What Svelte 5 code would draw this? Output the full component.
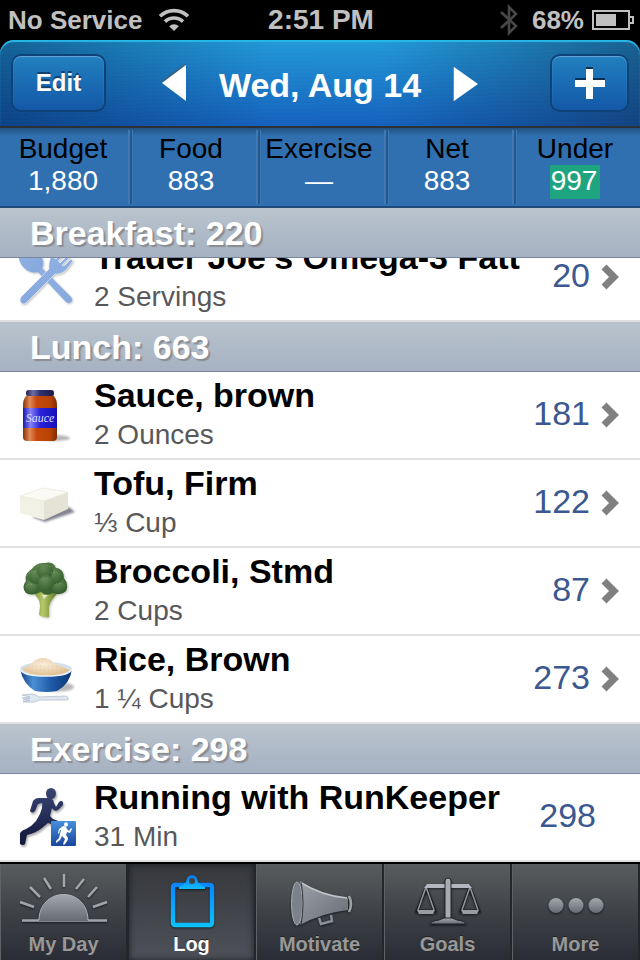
<script>
  const stats = [
    { label: 'Budget', value: '1,880' },
    { label: 'Food', value: '883' },
    { label: 'Exercise', value: '—' },
    { label: 'Net', value: '883' },
    { label: 'Under', value: '997', good: true }
  ];

  const sections = [
    {
      title: 'Breakfast: 220',
      items: [
        { icon: 'cutlery', name: 'Trader Joe’s Omega-3 Fatt', amount: '2 Servings', calories: 20, more: true, scrolled: true }
      ]
    },
    {
      title: 'Lunch: 663',
      items: [
        { icon: 'sauce', name: 'Sauce, brown', amount: '2 Ounces', calories: 181, more: true },
        { icon: 'tofu', name: 'Tofu, Firm', amount: '⅓ Cup', calories: 122, more: true },
        { icon: 'broccoli', name: 'Broccoli, Stmd', amount: '2 Cups', calories: 87, more: true },
        { icon: 'rice', name: 'Rice, Brown', amount: '1 ¼ Cups', calories: 273, more: true }
      ]
    },
    {
      title: 'Exercise: 298',
      items: [{ icon: 'run', name: 'Running with RunKeeper', amount: '31 Min', calories: 298 }]
    }
  ];

  const tabs = ['My Day', 'Log', 'Motivate', 'Goals', 'More'];
  let active = $state('Log');
</script>

<svg class="defs" width="0" height="0" aria-hidden="true">
  <defs>
    <linearGradient id="metal" x1="0" y1="0" x2="0" y2="1"><stop offset="0" stop-color="#a3a8ad" /><stop offset="1" stop-color="#666b71" /></linearGradient>
    <linearGradient id="glow" gradientUnits="userSpaceOnUse" x1="0" y1="5" x2="0" y2="57"><stop offset="0.15" stop-color="#0a84ff" /><stop offset="1" stop-color="#0cc2fb" /></linearGradient>
    <linearGradient id="clip" x1="0" y1="0" x2="0" y2="1"><stop offset="0" stop-color="#0b78ee" /><stop offset="1" stop-color="#10bdfc" /></linearGradient>
    <linearGradient id="jar" x1="0" x2="1"><stop offset="0" stop-color="#8a3306" /><stop offset="0.2" stop-color="#e08a5a" /><stop offset="0.4" stop-color="#c5480c" /><stop offset="0.8" stop-color="#b84205" /><stop offset="1" stop-color="#7d2c03" /></linearGradient>
    <linearGradient id="label" x1="0" x2="1"><stop offset="0" stop-color="#1813b4" /><stop offset="0.22" stop-color="#8480f2" /><stop offset="0.5" stop-color="#2a22dc" /><stop offset="1" stop-color="#150fb8" /></linearGradient>
    <linearGradient id="lid" x1="0" x2="1"><stop offset="0" stop-color="#20204e" /><stop offset="0.25" stop-color="#6f6fa8" /><stop offset="0.5" stop-color="#30306c" /><stop offset="1" stop-color="#1c1c4a" /></linearGradient>
    <linearGradient id="bowl" x1="0" x2="1"><stop offset="0" stop-color="#123f85" /><stop offset="0.25" stop-color="#4a8fd4" /><stop offset="0.6" stop-color="#1f5aa8" /><stop offset="1" stop-color="#0d3472" /></linearGradient>
    <radialGradient id="grain" cx="0.45" cy="0.35" r="0.65"><stop offset="0" stop-color="#f9efdf" /><stop offset="1" stop-color="#e0bd8c" /></radialGradient>
    <radialGradient id="leaf" cx="0.4" cy="0.3" r="0.8"><stop offset="0" stop-color="#668a56" /><stop offset="0.6" stop-color="#446d3b" /><stop offset="1" stop-color="#335629" /></radialGradient>
    <linearGradient id="stalk" x1="0" x2="1"><stop offset="0" stop-color="#6c8c29" /><stop offset="0.4" stop-color="#b7c86a" /><stop offset="1" stop-color="#51701b" /></linearGradient>
    <linearGradient id="navy" gradientUnits="userSpaceOnUse" x1="0" y1="0" x2="0" y2="58"><stop offset="0" stop-color="#3a4574" /><stop offset="1" stop-color="#10173a" /></linearGradient>
    <linearGradient id="badge" x1="0" y1="0" x2="0" y2="1"><stop offset="0" stop-color="#4590dc" /><stop offset="1" stop-color="#1c459c" /></linearGradient>
    <linearGradient id="steel" x1="0" y1="0" x2="0" y2="1"><stop offset="0" stop-color="#8fb1e2" /><stop offset="1" stop-color="#86a8de" /></linearGradient>
    <linearGradient id="horn" x1="0" y1="0" x2="1" y2="1"><stop offset="0" stop-color="#9aa0a8" /><stop offset="1" stop-color="#686d74" /></linearGradient>
  </defs>
</svg>

<div class="phone">
  <div class="status">
    <span class="carrier">
      No Service
      <svg width="32" height="24" viewBox="0 0 32 24" fill="none" stroke="#c0c0c0" stroke-width="3.6" aria-hidden="true">
        <path d="M2 8.3A20 20 0 0 1 30 8.3" /><path d="M7 13.6A13 13 0 0 1 25 13.6" />
        <path d="M16 23L11.2 18.2A7 7 0 0 1 20.8 18.2Z" fill="#c0c0c0" stroke="none" />
      </svg>
    </span>
    <time>2:51 PM</time>
    <span class="power">
      <svg width="18" height="32" viewBox="0 0 18 32" fill="none" stroke="#484848" stroke-width="2.6" aria-hidden="true"><path d="M1 8L16 22L9 29V3L16 10L1 24" /></svg>
      68%
      <svg width="42" height="20" viewBox="0 0 42 20" aria-hidden="true">
        <rect x="1" y="1" width="36" height="18" fill="none" stroke="#c0c0c0" stroke-width="2" />
        <path d="M38 7H41V13H38" fill="none" stroke="#c0c0c0" stroke-width="2" />
        <rect x="4" y="4" width="20" height="12" fill="#c0c0c0" />
      </svg>
    </span>
  </div>

  <header class="nav">
    <button class="key edit">Edit</button>
    <div class="day">
      <button class="step" aria-label="Previous day">
        <svg width="26" height="38" viewBox="0 0 26 38"><path d="M0 17L25 -1V16Z" fill="#555" opacity=".5" /><path d="M1 19L25 1V37Z" fill="#fff" /></svg>
      </button>
      <h1>Wed, Aug 14</h1>
      <button class="step" aria-label="Next day">
        <svg width="26" height="38" viewBox="0 0 26 38"><path d="M1 3L25 20L1 37Z" fill="#fff" /><path d="M.5 3V37" stroke="#888" /></svg>
      </button>
    </div>
    <button class="key add" aria-label="Add">
      <svg width="30" height="34" viewBox="0 0 30 34"><path d="M11 1H18V12H30V19H0V12H11Z" fill="#0b3157" /><path d="M11 3H18V14H30V21H18V33H11V21H0V14H11Z" fill="#fff" /></svg>
    </button>
  </header>

  <dl class="stats">
    {#each stats as s}
      <div class="stat">
        <dt>{s.label}</dt>
        <dd><span class:good={s.good}>{s.value}</span></dd>
      </div>
    {/each}
  </dl>

  <main>
    {#each sections as section}
      <section>
        <h2>{section.title}</h2>
        {#each section.items as item}
          <a class="row" class:scrolled={item.scrolled} href="#{item.icon}">
            <svg class="pic" width="60" height="60" viewBox="0 0 60 60" aria-hidden="true">
              {#if item.icon === 'cutlery'}
                <g fill="url(#steel)" class="soft">
                  <path d="M22 19L53 50Q55 53 53 55Q51 57 48 55L19 24Z" />
                  <ellipse cx="13" cy="13" rx="10.5" ry="14" transform="rotate(-42 13 13)" />
                  <path d="M31 22Q30 12 36 6L41 1L43 3L36 11L38 12L46 4L48 6L40 14L42 16L50 8L52 10L44 18L46 19L53 12L55 14L49 22Q43 28 37 27L8 56Q6 58 3 56Q1 53 3 50Z" stroke="#fff" stroke-width=".5" />
                </g>
              {:else if item.icon === 'sauce'}
                <ellipse cx="36" cy="53" rx="16" ry="3" fill="#777" opacity=".55" class="blur" />
                <path d="M9 10H35Q39 14 39 20V52Q39 56 35 56H9Q5 56 5 52V20Q5 14 9 10Z" fill="url(#jar)" />
                <path d="M5 23H39V43H5Z" fill="url(#label)" />
                <rect x="8" y="5" width="28" height="6" rx="2.5" fill="url(#lid)" />
                <text x="22" y="37" text-anchor="middle" class="script">Sauce</text>
              {:else if item.icon === 'tofu'}
                <path d="M14 44L27 49L57 39L51 34Z" fill="#667" opacity=".8" class="blur" />
                <path d="M2 23L26 28V47L2 40Z" fill="#f2f1e6" />
                <path d="M26 28L50 19V36L26 47Z" fill="#e5e3d5" />
                <path d="M2 23L25 15L50 19L26 28Z" fill="#fbfaf4" stroke="#e9e8dc" stroke-width=".8" />
              {:else if item.icon === 'broccoli'}
                <g class="soft">
                  <path d="M14 31Q22 37 22 45L21 54Q26 57 31 56V46Q32 39 41 31L32 28H20Z" fill="url(#stalk)" />
                  <path d="M24 34L26 38L30 34" fill="#dfe6c9" />
                  <g fill="url(#leaf)">
                    <path d="M8 32Q3 26 8 20Q6 13 13 9Q18 1 27 2Q35 0 38 7Q46 8 46 17Q51 23 48 30Q43 35 35 32Q28 36 23 31Q14 35 8 32Z" />
                    <circle cx="14" cy="26" r="7.500" /><circle cx="41" cy="25" r="7.500" /><circle cx="18" cy="15" r="8" /><circle cx="37" cy="15" r="8" />
                    <circle cx="27" cy="10" r="8" /><circle cx="28" cy="22" r="8" />
                  </g>
                </g>
                <g fill="none" stroke="#a0b78b" stroke-width="1" stroke-dasharray="1 2" opacity=".6">
                  <path d="M20 5Q27 2 34 7M9 15Q13 9 19 11M33 12Q39 9 43 15M8 26Q12 21 17 25M38 23Q43 20 47 26M23 19Q28 15 34 20" />
                </g>
              {:else if item.icon === 'rice'}
                <ellipse cx="41" cy="38" rx="15" ry="4.500" fill="#666" opacity=".45" class="blur" />
                <ellipse cx="28" cy="20" rx="26" ry="7" fill="#d3e1ec" />
                <path d="M4 20Q10 18 15 13Q19 9 25 9Q31 9 36 14L52 21Q42 28 28 27Q11 27 4 20Z" fill="url(#grain)" />
                <path d="M10 21L47 21M14 17L42 18M20 13L34 14" stroke="#d2ad76" stroke-dasharray="1 3" opacity=".4" />
                <path d="M2 20Q4 27 28 27Q52 27 54 20Q52 35 39 42Q28 44 17 42Q5 35 2 20Z" fill="url(#bowl)" />
                <path d="M2 20Q4 27 28 27Q52 27 54 20" fill="none" stroke="#e9f2f8" stroke-width="1.4" />
                <path d="M4 46L14 45Q19 46 21 48L48 47Q51 48 50 51L21 51Q17 54 12 53L5 53L12 51.5L5 51L12 49.5L4 49L12 48Z" fill="#dfe7f0" stroke="#b4bfce" stroke-width=".8" />
              {:else}
                <g class="shade" fill="url(#navy)">
                  <ellipse cx="33" cy="6.500" rx="5" ry="5.500" />
                  <path d="M28 11Q35 10 36 16L38 20L41 15Q43 13 45 15V18L40 23Q36 25 34 21L32 29L35 32L46 36L45 41L30 36L24 41Q18 46 9 48L7 57Q5 59 2 57V46Q4 43 8 42Q14 39 18 34L22 27Q25 20 24 16L20 17L17 24Q14 27 12 24L15 14Q17 11 21 11Z" />
                </g>
                <rect x="33" y="34" width="25" height="25" rx="1" fill="url(#badge)" />
                <g fill="#fff">
                  <ellipse cx="48" cy="37.500" rx="2" ry="2.300" />
                  <path d="M45 39Q48 39 49 42L51 44L53 41L54 42L52 46L49 45L48 48L50 51Q50 54 46 58L45 57L47 52L44 49L42 53L38 56L38 54L41 51L43 43L42 43L41 47L40 46L41 42Z" />
                </g>
              {/if}
            </svg>
            <span class="text">
              <span class="name">{item.name}</span>
              <span class="amount">{item.amount}</span>
            </span>
            <span class="cal" class:flush={!item.more}>{item.calories}</span>
            {#if item.more}
              <svg width="20" height="28" viewBox="0 0 20 28" fill="none" stroke="#808080" stroke-width="7" aria-hidden="true"><path d="M4 4L14 14L4 24" /></svg>
            {/if}
          </a>
        {/each}
      </section>
    {/each}
  </main>

  <nav class="tabs">
    {#each tabs as tab}
      <button class="tab" class:active={tab === active} onclick={() => (active = tab)}>
        <svg width="96" height="62" viewBox="0 0 96 62" aria-hidden="true">
          {#if tab === 'My Day'}
            <g stroke="#a2a6ab" stroke-width="2.6"><path d="M48 4V17M28 8L35 19M14 17L24 27M4 32L18 37M68 9L60 19M81 17L72 27M91 32L77 37M6 50.500H91" /></g>
            <path d="M23 51C23 36 33 24.500 47.500 24.500S72 36 72 51Z" fill="url(#metal)" /><path d="M23 50C23 36 33 24.500 47.500 24.500S72 36 72 50" fill="none" stroke="#b4b8bc" />
          {:else if tab === 'Log'}
            <rect x="29" y="15" width="39" height="40" rx="2" fill="none" stroke="url(#glow)" stroke-width="4.400" />
            <path d="M35 19V17Q40 15 42 12Q43 5 48 5T54 12Q56 15 61 17V19Z" fill="url(#clip)" />
            <circle cx="48" cy="11" r="3" fill="#404246" />
          {:else if tab === 'Motivate'}
            <path d="M47 48L49 54L60 51L59 45" fill="none" stroke="#8b9096" stroke-width="2.500" />
            <path d="M28 12Q50 26 76 28V40Q50 43 28 55Q32 33 28 12Z" fill="url(#horn)" /><path d="M28 12Q50 26 75 28" fill="none" stroke="#c0c3c7" stroke-width="1.500" />
            <ellipse cx="25" cy="33.500" rx="5.500" ry="21.500" fill="#7b828b" stroke="#a9aeb4" />
            <path d="M29 12Q33 33 29 55" fill="none" stroke="#303337" />
            <path d="M77 26Q81 34 77 42" fill="none" stroke="#9ea2a7" stroke-width="2.600" />
          {:else if tab === 'Goals'}
            <g stroke="#1c1e21" stroke-width="3" fill="none"><path d="M27 16H69L79 41H61L70 17M27 16L17 41H35L26 17" /></g>
            <g fill="none" stroke="#93979c" stroke-width="1.500"><path d="M26 17L18 40M26 17L34 40M70 17L62 40M70 17L78 40" /></g>
            <path d="M27 14H69L72 18H24Z" fill="#b5b5bf" />
            <path d="M17 40H35L33 44H19ZM61 40H79L77 44H63Z" fill="#999da1" />
            <rect x="45" y="8" width="6" height="42" rx="3" fill="#a8abaf" stroke="#25272a" />
            <path d="M30 54Q31 51 39 50L44 48H52L57 50Q65 51 66 54Z" fill="url(#metal)" stroke="#25272a" />
          {:else}
            <g fill="url(#metal)"><circle cx="28" cy="35.500" r="7.500" /><circle cx="48" cy="35.500" r="7.500" /><circle cx="68" cy="35.500" r="7.500" /></g>
          {/if}
        </svg>
        <span>{tab}</span>
      </button>
    {/each}
  </nav>
</div>

<style>
  :global(body) { margin: 0; background: #000; }
  .defs { position: absolute; }
  .phone {
    display: flex; flex-direction: column; min-height: 100vh;
    background: #000; font-family: 'Liberation Sans', Arial, Helvetica, sans-serif;
  }
  svg { flex: none; display: block; }
  button { border: 0; margin: 0; padding: 0; background: none; color: inherit; font: inherit; }

  .status {
    display: grid; grid-template-columns: 1fr auto 1fr; align-items: center;
    height: 40px; padding: 0 6px 0 8px; box-sizing: border-box;
    color: #c0c0c0; font-size: 26px; font-weight: bold;
  }
  .status time { font-size: 28px; }
  .carrier, .power { display: flex; align-items: center; }
  .carrier { gap: 16px; }
  .power { gap: 8px; justify-content: flex-end; }
  .power svg:first-child { margin-right: 6px; }

  .nav {
    display: grid; grid-template-columns: 1fr auto 1fr; align-items: center;
    height: 88px; padding: 0 11px; box-sizing: border-box;
    border-bottom: 2px solid #2c3138; border-radius: 14px 14px 0 0;
    background:
      repeating-linear-gradient(179deg, rgba(255,255,255,.012) 0 1px, transparent 1px 3px, rgba(0,0,0,.015) 3px 4px),
      linear-gradient(90deg, rgba(0,22,60,.42), transparent 42%, transparent 60%, rgba(14,30,60,.46)),
      linear-gradient(#229ad8, #1561bd);
    box-shadow: inset 0 2px 1px #26b9e8;
  }
  .key {
    height: 58px; border-radius: 10px; color: #fff;
    display: flex; align-items: center; justify-content: center;
    background: linear-gradient(#2180bf, #1458a7);
    border: 2px solid #0e4379;
    box-shadow: inset 0 1px 1px #64a9d7;
  }
  .edit { width: 95px; font-size: 24px; font-weight: bold; text-shadow: 0 -2px 0 #10406f; }
  .add { width: 79px; justify-self: end; }
  .day { display: flex; align-items: center; gap: 32px; }
  .nav h1 { margin: 0; padding-top: 4px; color: #fff; font-size: 34px; line-height: 40px; white-space: nowrap; }

  .stats {
    display: flex; margin: 0; height: 80px; box-sizing: border-box;
    padding: 2px 0; border-bottom: 2px solid #1d4a78;
    background: linear-gradient(#22517f, #306fb0 8px);
  }
  .stat {
    flex: 1; min-width: 0; text-align: center; font-size: 28px; line-height: 32px;
    padding: 3px 2px 0 0; box-sizing: border-box;
  }
  .stat + .stat {
    background: linear-gradient(90deg, #3d7ab6 2px, #255788 2px 4px, #3d7ab6 4px 5px, transparent 5px);
  }
  .stat dt { color: #000; }
  .stat dd { margin: 0; color: #fff; }
  .stat .good { display: inline-block; padding: 0 3px 2px 1px; background: #1fa480; }

  main { flex: 1; background: #fff; }
  h2 {
    margin: 0; height: 50px; line-height: 48px; padding: 1px 30px 0; box-sizing: border-box;
    border-bottom: 1px solid #78859c;
    background: linear-gradient(#b9c4ce, #a6b1c2);
    color: #fff; font-size: 34px; text-shadow: 2px 2px 1px #8a8c93;
  }
  .row {
    display: flex; align-items: center; height: 88px; box-sizing: border-box;
    padding: 0 20px 0 18px; border-bottom: 2px solid #e0e0e0;
    background: #fff; color: #000; text-decoration: none;
  }
  .row.scrolled { height: 64px; align-items: flex-end; overflow: hidden; }
  .scrolled > * { margin-bottom: 13px; }
  .scrolled > .text { margin-bottom: 3px; }
  .scrolled > .cal { margin-bottom: 25px; }
  .scrolled > svg:last-child { margin-bottom: 29px; }
  .text { display: flex; flex-direction: column; flex: 1; min-width: 0; margin-left: 16px; height: 80px; }
  .name { font-size: 34px; line-height: 40px; font-weight: bold; white-space: nowrap; }
  .amount { font-size: 28px; line-height: 40px; color: #58585a; }
  .cal { margin: 0 10px 4px 0; font-size: 34px; line-height: 40px; color: #3b5890; }
  .cal.flush { margin-right: 24px; }
  .script { font: italic 12px 'Liberation Serif', serif; fill: #dcdcff; }
  .shade { filter: drop-shadow(1px 2px 1px rgba(0,0,0,.35)); }
  .soft { filter: drop-shadow(1px 1px 1px rgba(0,0,0,.25)); }
  .blur { filter: blur(1px); }
  .pic { overflow: visible; }

  .tabs { display: flex; height: 98px; box-sizing: border-box; border-top: 2px solid #000; }
  .tab {
    flex: 1; min-width: 0; display: flex; flex-direction: column; align-items: center; justify-content: flex-start;
    padding-top: 6px; box-sizing: border-box; color: #989898; font-size: 20px; line-height: 24px; font-weight: bold;
    background: linear-gradient(#595c5f, #3c4044 55%, #2a2c36);
    border-left: 1px solid #606366; border-right: 2px solid #24272a;
    text-shadow: 0 -1px 0 #222;
  }
  .tab.active {
    color: #fff; background: linear-gradient(#36383c, #4e5159);
    box-shadow: inset 0 0 6px #1c1e22; border-left-color: #24272a;
  }
  .tab svg { filter: drop-shadow(0 1px 1px rgba(0,0,0,.6)); }
</style>
